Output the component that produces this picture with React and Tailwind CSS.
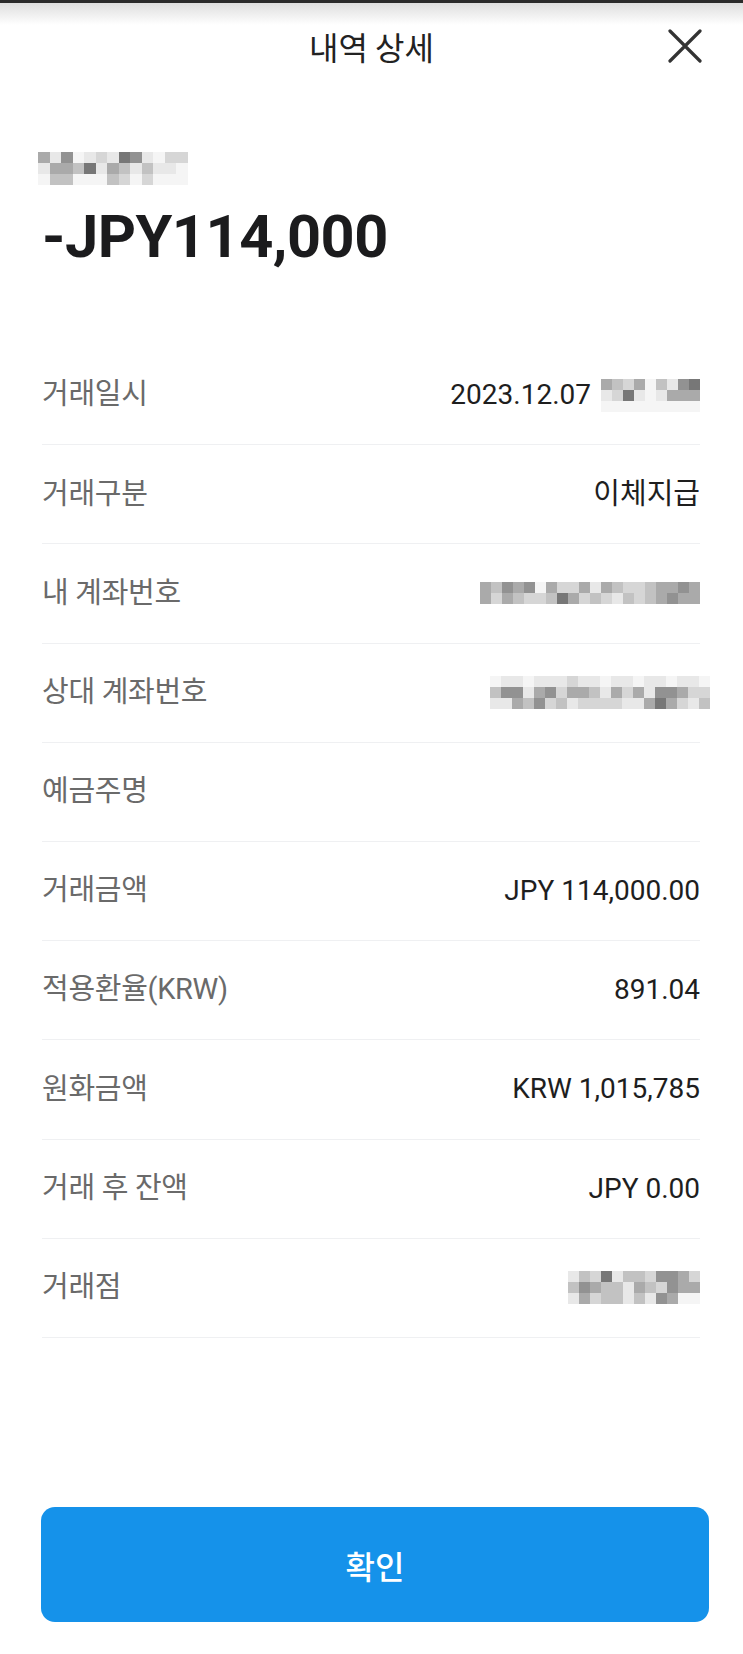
import React from "react";

const shades = [
  "bg-[#f5f5f5]",
  "bg-[#e8e8e8]",
  "bg-[#d6d6d6]",
  "bg-[#c2c2c2]",
  "bg-[#aaaaaa]",
  "bg-[#929292]",
  "bg-[#777777]",
];

// masked values, drawn as mosaic blocks
const maskName = ["4150121651022", "1443614313110", "0330003202000"];
const maskTime = ["432403156", "126101444", "000000000"];
const maskMyAccount = [
  "43545042241432234454",
  "42432236423213234544",
];
const maskOtherAccount = [
  "01101112110110110110",
  "35514524431424155422",
  "11435231222211464213",
];
const maskBranch = ["132613325542", "354331432544", "142331315400"];

const details = [
  { label: "거래일시", value: "2023.12.07", mask: maskTime },
  { label: "거래구분", value: "이체지급", korean: true },
  { label: "내 계좌번호", mask: maskMyAccount },
  { label: "상대 계좌번호", mask: maskOtherAccount, wide: true },
  { label: "예금주명" },
  { label: "거래금액", value: "JPY 114,000.00" },
  { label: "적용환율(KRW)", value: "891.04" },
  { label: "원화금액", value: "KRW 1,015,785" },
  { label: "거래 후 잔액", value: "JPY 0.00" },
  { label: "거래점", mask: maskBranch },
];

function Mosaic({ rows, cell = "w-[11px] h-[11px]" }) {
  return (
    <div className="flex flex-col">
      {rows.map((row, i) => (
        <div key={i} className="flex">
          {row.split("").map((c, j) => (
            <div key={j} className={`${cell} ${shades[Number(c)]}`} />
          ))}
        </div>
      ))}
    </div>
  );
}

function DetailRow({ item }) {
  return (
    <div className="flex h-[99.2px] items-center justify-between border-b-[1.5px] border-[#eff0f2]">
      <span className="text-[29px] tracking-[-0.3px] text-[#6a6a6a]">{item.label}</span>
      <div className={`flex items-center gap-[10px] ${item.wide ? "-mr-[10px]" : ""}`}>
        {item.value && (
          <span
            className={`${item.korean ? "text-[29px]" : "text-[28px]"} text-[#1e1e1e]`}
          >
            {item.value}
          </span>
        )}
        {item.mask && <Mosaic rows={item.mask} />}
      </div>
    </div>
  );
}

export default function App() {
  return (
    <div className="flex min-h-screen flex-col bg-white font-['Roboto','Noto_Sans_CJK_KR',sans-serif]">
      <header className="relative flex h-[92px] items-center justify-center">
        <div className="absolute inset-x-0 top-0">
          <div className="h-[3px] bg-[#2b2b2b]" />
          <div className="h-[22px] bg-linear-to-b from-[#dedede] to-white" />
        </div>
        <h1 className="text-[32px] text-[#222222] font-['Noto_Sans_CJK_KR',sans-serif]">
          내역 상세
        </h1>
        <button className="absolute right-[41px] top-[29px]">
          <svg width="34" height="34" viewBox="0 0 34 34" fill="none">
            <path
              d="M2 2L32 32M32 2L2 32"
              stroke="#333333"
              strokeWidth="3.2"
              strokeLinecap="round"
            />
          </svg>
        </button>
      </header>

      <main className="pl-[42px] pr-[43px]">
        <div className="mt-[60px] -ml-[4px]">
          <Mosaic rows={maskName} cell="w-[11.5px] h-[11px]" />
        </div>
        <div className="mt-[22px] h-[60px] text-[59.5px] font-bold leading-[60px] tracking-[-0.5px] text-[#1b1b1d]">
          -JPY114,000
        </div>

        <div className="mt-[79px]">
          {details.map((item) => (
            <DetailRow key={item.label} item={item} />
          ))}
        </div>
      </main>

      <div className="mt-auto mb-[32px] ml-[41px] mr-[34px]">
        <button className="flex h-[115px] w-full items-center justify-center rounded-[14px] bg-[#1592ea] text-[32px] font-medium text-white font-['Noto_Sans_CJK_KR',sans-serif]">
          확인
        </button>
      </div>
    </div>
  );
}
